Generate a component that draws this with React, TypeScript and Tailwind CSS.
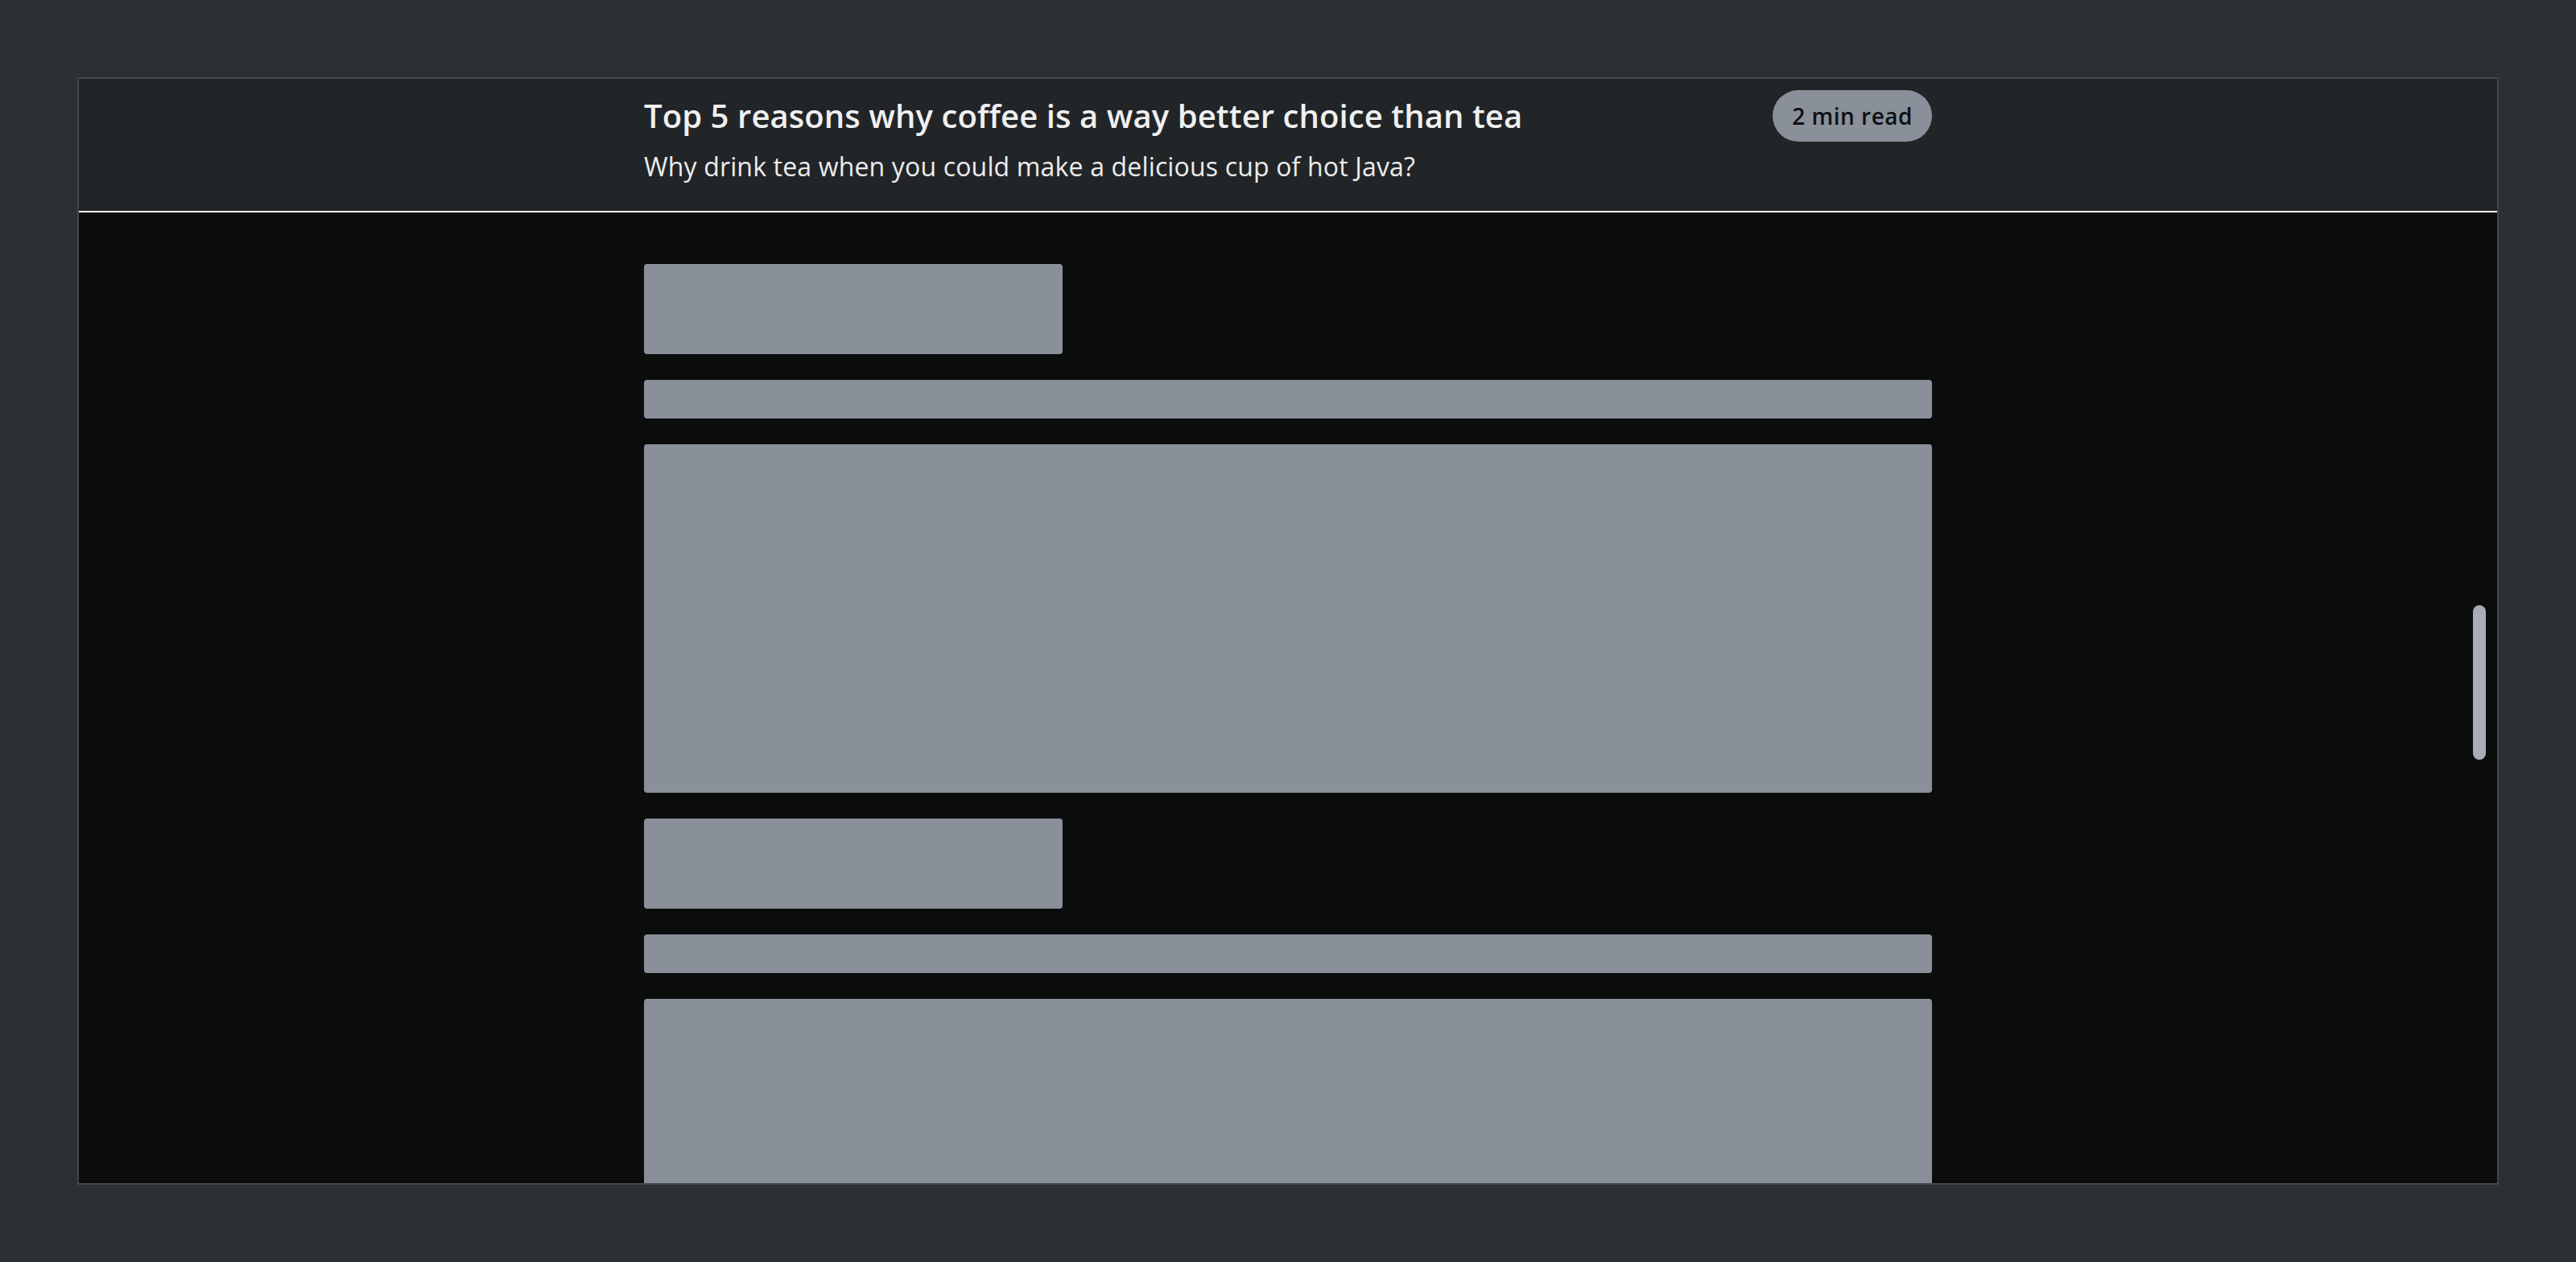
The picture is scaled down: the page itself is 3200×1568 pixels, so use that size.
export default function App() {
  return (
    <div
      className="h-screen bg-[#2c2f34] p-24"
      style={{ fontFamily: '"Open Sans", "Noto Sans", sans-serif' }}
    >
      <div className="flex h-full flex-col overflow-hidden border-2 border-[#44474e]">
        {/* Header */}
        <header className="border-b-2 border-[#f0f0f0] bg-[#222528]">
          <div className="mx-auto w-[1600px] pt-[14px] pb-[31px]">
            <div className="flex items-start justify-between">
              <h1 className="text-[40px] leading-[64px] font-semibold tracking-[0.08px] text-[#f0f0f0]">
                Top 5 reasons why coffee is a way better choice than tea
              </h1>
              <span className="flex h-16 items-center rounded-full bg-[#8a909a] px-6 text-[28px] font-semibold tracking-[0.5px] text-[#0e1012]">
                2 min read
              </span>
            </div>
            <p className="mt-[7px] text-[32px] leading-[48px] tracking-[0.16px] text-[#ececec]">
              Why drink tea when you could make a delicious cup of hot Java?
            </p>
          </div>
        </header>

        {/* Body */}
        <main className="relative flex-1 overflow-hidden bg-[#0b0d0c]">
          <div className="mx-auto flex w-[1600px] flex-col gap-8 pt-16">
            <div className="h-28 w-[520px] rounded bg-[#8a909a]" />
            <div className="h-12 w-full rounded bg-[#8a909a]" />
            <div className="h-[433px] w-full rounded bg-[#8a909a]" />
            <div className="h-28 w-[520px] rounded bg-[#8a909a]" />
            <div className="h-12 w-full rounded bg-[#8a909a]" />
            <div className="h-[433px] w-full rounded bg-[#8a909a]" />
          </div>

          {/* scrollbar thumb */}
          <div className="absolute top-[488px] right-[14px] h-48 w-4 rounded-full bg-[#a9adb4]" />
        </main>
      </div>
    </div>
  );
}
